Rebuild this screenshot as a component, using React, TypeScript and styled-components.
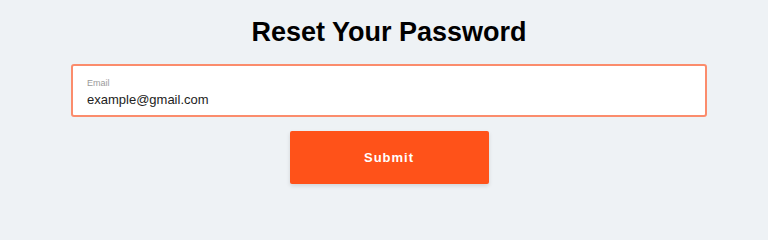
import React, { useState } from 'react';
import styled, { createGlobalStyle } from 'styled-components';

const GlobalStyle = createGlobalStyle`
  html, body {
    margin: 0;
    padding: 0;
    background: #eef2f5;
    font-family: "Liberation Sans", Arial, sans-serif;
  }
`;

const Page = styled.div`
  height: 224px;
  overflow: hidden;
  padding: 17px 0 0 10px;
  box-sizing: border-box;
  display: flex;
  flex-direction: column;
  align-items: center;
`;

const Title = styled.h1`
  margin: 0;
  font-size: 27px;
  font-weight: 700;
  color: #000;
  line-height: 31px;
`;

const Field = styled.label`
  margin-top: 16px;
  width: 636px;
  height: 53px;
  box-sizing: border-box;
  background: #fff;
  border: 2px solid #fb8c6c;
  border-radius: 3px;
  padding: 12px 14px 0 14px;
  display: flex;
  flex-direction: column;
`;

const FieldLabel = styled.span`
  font-size: 9px;
  color: #9a9a9a;
  line-height: 11px;
`;

const FieldInput = styled.input`
  border: none;
  outline: none;
  padding: 0;
  margin-top: 3px;
  font-family: "Liberation Sans", Arial, sans-serif;
  font-size: 13px;
  line-height: 16px;
  color: #222;
  background: transparent;
`;

const SubmitButton = styled.button`
  margin-top: 14px;
  width: 199px;
  height: 53px;
  border: none;
  border-radius: 2px;
  background: #ff5219;
  color: #fff;
  font-family: "Liberation Sans", Arial, sans-serif;
  font-weight: 700;
  font-size: 13px;
  letter-spacing: 1px;
  box-shadow: 0 2px 4px rgba(0, 0, 0, 0.12);
  cursor: pointer;
`;

function App() {
  const [email, setEmail] = useState('example@gmail.com');

  return (
    <>
      <GlobalStyle />
      <Page>
        <Title>Reset Your Password</Title>
        <Field>
          <FieldLabel>Email</FieldLabel>
          <FieldInput value={email} onChange={(e) => setEmail(e.target.value)} />
        </Field>
        <SubmitButton>Submit</SubmitButton>
      </Page>
    </>
  );
}

export default App;
